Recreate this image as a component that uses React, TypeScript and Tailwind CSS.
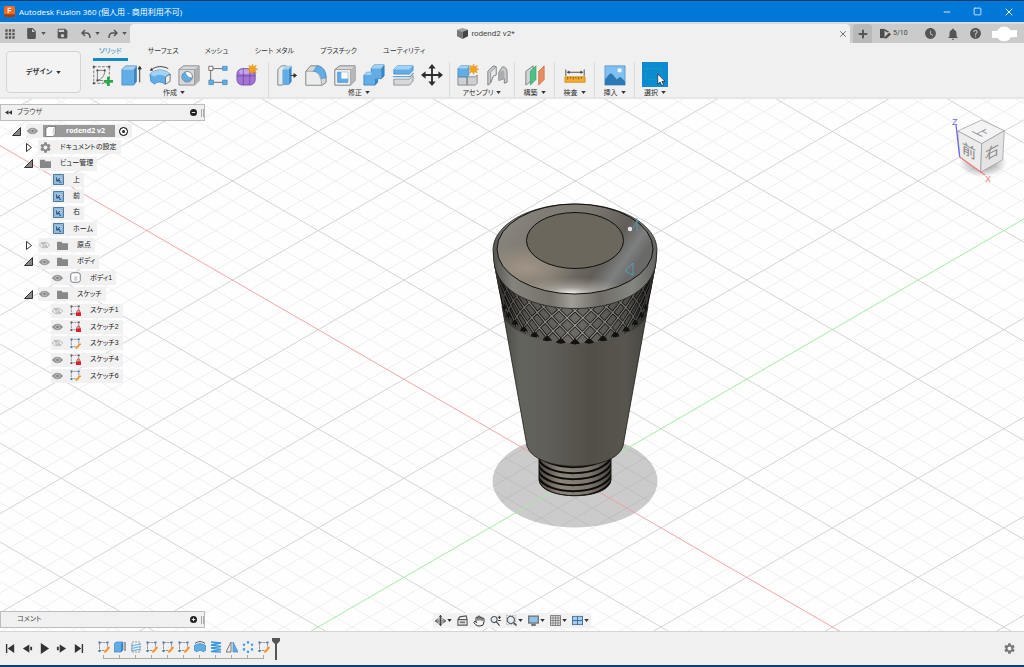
import { type ReactNode } from "react";
import clsx from "clsx";
import { Hand, Minus, Plus, Square, X } from "lucide-react";
import { MdApps, MdHelp, MdInsertDriveFile, MdNotifications, MdSave, MdSettings, MdWatchLater } from "react-icons/md";

const jp = "font-['Liberation_Sans','Noto_Sans_CJK_JP',sans-serif] [font-feature-settings:'palt']";

function Caret({ className = "" }: { className?: string }) {
  return (
    <svg viewBox="0 0 6 4" className={clsx("h-[3px] w-[5px] shrink-0", className)} fill="currentColor" aria-hidden>
      <path d="M0 0h6L3 4z" />
    </svg>
  );
}

function Glyph({ size = "h-6 w-6", box = "0 0 24 24", children }: { size?: string; box?: string; children: ReactNode }) {
  return (
    <svg viewBox={box} className={clsx("shrink-0", size)} fill="none" aria-hidden>
      {children}
    </svg>
  );
}

/* ---------- ribbon icons ---------- */

const BLUE = "#62ade6";
const DEEP = "#3a86c4";
const LIGHT = "#a5d2f3";
const GREY = "#d7d8d9";
const EDGE = "#7c7e80";

const sun = (
  <path
    d="M18 0l1.2 3 2.9-1.6-1.1 3.1 3 1.1-3 1.2 1.2 3-3-1.4L18 11.500l-1.200-3.100-3 1.400 1.300-3-3.100-1.200 3.100-1.100-1.200-3.100 3 1.600z"
    fill="#f2a21c"
    stroke="#d98a10"
    strokeWidth=".4"
  />
);

const ribbonIcons: Record<string, ReactNode> = {
  sketch: (
    <>
      <path d="M3 3h17v18H3z" stroke="#555" strokeDasharray="3 1.500" strokeWidth=".8" />
      <path d="M7 7v11M7 18h6M7 7h8M15 7c0 6-3 9-8 11" stroke="#777" strokeWidth="1" />
      <path d="M2 2h2v2H2zM19 2h2v2h-2zM2 20h2v2H2zM6 6h2v2H6zM14 6h2v2h-2zM6 17h2v2H6z" fill="#444" />
      <path d="M17.500 14h3v3.500H24v3h-3.500V24h-3v-3.500H14v-3h3.500z" fill="#2ba84a" />
    </>
  ),
  extrude: (
    <>
      <path d="M2 6l4-4h12l-3 4z" fill={LIGHT} />
      <path d="M2 6h13v17H2z" fill={BLUE} />
      <path d="M15 6l3-4v17l-3 4z" fill={DEEP} />
      <path d="M2 6l4-4h12v17l-3 4H2z" stroke={DEEP} strokeWidth=".7" />
      <path d="M21.500 20V4M19.800 5.500l1.700-3 1.700 3z" stroke="#333" fill="#333" />
    </>
  ),
  revolve: (
    <>
      <path d="M1 11c6-6 16-6 22 0l-1 8-5 3c-3-3-8-3-11 0l-4-3z" fill={BLUE} stroke={DEEP} strokeWidth=".8" />
      <path d="M1 11c6-6 16-6 22 0l-5 3c-4-3-9-3-12 0z" fill={LIGHT} />
      <path d="M23 11v8l-5 3v-8z" fill="#eee" stroke="#555" strokeWidth=".8" />
      <path d="M3 6c5-4 12-4 18-1" stroke="#333" />
      <path d="M1 7.500l1.500-3.500 2 3z" fill="#333" />
    </>
  ),
  hole: (
    <>
      <path d="M1 6l5-4h17v16l-5 5H1z" fill={GREY} stroke={EDGE} strokeWidth=".9" />
      <path d="M18 6l5-4v16l-5 5z" fill="#aeb0b2" />
      <path d="M1 6h17v17" stroke={EDGE} strokeWidth=".6" />
      <circle cx="10" cy="14" r="5.800" fill="#fff" stroke={EDGE} />
      <path d="M8 9a5.200 5.200 0 1 0 7 6c-4 0-6-2-7-6z" fill={BLUE} stroke={DEEP} strokeWidth=".6" />
    </>
  ),
  pattern: (
    <>
      <path d="M5 5h14M4 5v15M5 20h14" stroke="#555" strokeWidth=".9" />
      <path d="M2 2.500h4.500V7H2z" fill="#fff" stroke="#666" />
      <path d="M17 2.500h5V7h-5zM2 17.500h5v5H2zM17 17.500h5v5h-5z" fill={BLUE} stroke={DEEP} strokeWidth=".7" />
    </>
  ),
  form: (
    <>
      <rect x="1" y="5" width="20" height="18" rx="6" fill="#a275d6" />
      <path d="M3 8c4-4 12-4 15 0l-3 3H5z" fill="#c6a5ec" />
      <path d="M8 5v18M15 5v18M1 13h20" stroke="#6e43a3" strokeWidth=".8" />
      <rect x="1" y="5" width="20" height="18" rx="6" stroke="#6e43a3" strokeWidth=".8" />
      {sun}
    </>
  ),
  pressPull: (
    <>
      <path d="M2 6l4-4h5v17l-4 4H2z" fill="#e8e9ea" stroke={EDGE} />
      <path d="M7 6l3-4h7l-3 4z" fill={LIGHT} />
      <path d="M7 6h7v17H7z" fill={BLUE} />
      <path d="M14 6l3-4v17l-3 4z" fill={DEEP} />
      <path d="M16 12.500h5M19.500 10.500l3 2-3 2z" stroke="#333" fill="#333" />
    </>
  ),
  fillet: (
    <>
      <path d="M1 23V8l5-6h7c6 0 10 6 10 13v5l-4 3z" fill={GREY} stroke={EDGE} />
      <path d="M1 8h8c5 0 9 6 9 15H1z" fill="#ebecec" stroke={EDGE} strokeWidth=".6" />
      <path d="M9 8l4-6c6 0 10 6 10 13l-5 1c-1-5-4-8-9-8z" fill={BLUE} stroke={DEEP} strokeWidth=".6" />
    </>
  ),
  shell: (
    <>
      <path d="M1 6l5-4h17v16l-5 5H1z" fill={GREY} stroke={EDGE} />
      <path d="M1 6h17v17H1z" fill="#ededed" stroke={EDGE} strokeWidth=".7" />
      <path d="M18 6l5-4v16l-5 5z" fill="#b5b7b9" />
      <path d="M4 9h11v11H4z" fill={BLUE} stroke={DEEP} strokeWidth=".7" />
      <path d="M8 9h7v7H8z" fill="#fff" />
    </>
  ),
  combine: (
    <>
      <path d="M9 5l3-4h11v12l-3 3h-4v4l-3 3H1V12l3-3h5z" fill={BLUE} stroke={DEEP} strokeWidth=".9" />
      <path d="M9 5l3-4h11l-3 4zM1 12l3-3h5v3z" fill={LIGHT} />
      <path d="M20 5l3-4v12l-3 3zM13 16h3v4l-3 3z" fill={DEEP} />
    </>
  ),
  offset: (
    <>
      <path d="M2 6l4-4h17v5l-4 4H2z" fill={BLUE} stroke={DEEP} strokeWidth=".8" />
      <path d="M2 6l4-4h17l-4 4z" fill={LIGHT} />
      <path d="M1 12.500h18.500l4-3.500v3l-4 3.500H1z" fill="#fff" />
      <path d="M1 14h18.500l4-4" stroke={DEEP} strokeWidth="1.100" />
      <path d="M2 16.500h17l4-4v6l-4 4.500H2z" fill={GREY} stroke={EDGE} strokeWidth=".8" />
    </>
  ),
  move: (
    <path
      d="M12 0l4 5h-3v6h6V8l5 4-5 4v-3h-6v6h3l-4 5-4-5h3v-6H5v3l-5-4 5-4v3h6V5H8z"
      fill="#2c2c2c"
    />
  ),
  component: (
    <>
      <path d="M1 14h10v9H1zM11 14h9l2-2v9l-2 2h-9z" fill="#cfd0d1" stroke={EDGE} strokeWidth=".9" />
      <path d="M1 5l3-3h9v10l-2 2H1z" fill={BLUE} stroke={DEEP} strokeWidth=".8" />
      <path d="M1 5l3-3h9l-2 3z" fill={LIGHT} />
      {sun}
    </>
  ),
  joint: (
    <>
      <path d="M2 8l6-6 3 1v9l-3 1-3 8-3 2z" fill="#c9cacc" stroke={EDGE} />
      <path d="M5 9l6-6v9l-3 1-3 7z" fill="#e6e7e8" stroke={EDGE} strokeWidth=".7" />
      <path d="M14 9l4-6c3 0 5 2 5 6v11l-3 1v-5l-6 2z" fill="#c9cacc" stroke={EDGE} />
      <path d="M14 9l4-2c2 0 2 2 2 5v4l-6 2z" fill="#aaacae" />
    </>
  ),
  construct: (
    <>
      <path d="M2 8l8-6v15l-8 6z" fill="#d2d4d5" stroke={EDGE} />
      <path d="M7 8l6-6v15l-6 6z" fill="#4cc383" stroke="#36a069" strokeWidth=".8" />
      <path d="M16 8l6-6v15l-6 6z" fill="#e88d61" stroke="#c96c40" strokeWidth=".8" />
    </>
  ),
  inspect: (
    <>
      <path d="M2 6v7M22 6v7M4 9h16" stroke="#444" />
      <path d="M3 9l3-2v4zM21 9l-3-2v4z" fill="#444" />
      <path d="M1 14h22v6H1z" fill="#f3ac2f" stroke="#c98411" strokeWidth=".8" />
      <path d="M4 14v3M7 14v2M10 14v3M13 14v2M16 14v3M19 14v2" stroke="#7a4d05" strokeWidth=".8" />
    </>
  ),
  insert: (
    <>
      <path d="M1 2h22v21H1z" fill="#7fc0f0" stroke="#3f87bf" strokeWidth=".7" />
      <path d="M1 17l5-6c1-1 2-1 3 0l5 6 2-2c1-1 2-1 3 0l4 4v4H1z" fill="#2d79b5" />
      <circle cx="17" cy="7" r="2.300" fill="#fff" />
    </>
  ),
  select: (
    <>
      <path d="M2 5h17v12H2z" stroke="#1eb0a0" strokeDasharray="2 1.500" strokeWidth=".7" />
      <path d="M15 11v11l2.600-2.300 1.700 3.800 2-1-1.700-3.600H23z" fill="#fff" stroke="#222" strokeWidth=".8" />
    </>
  ),
};

type Tool = [icon: string, name: string];

const groups: { label: string; tools: Tool[] }[] = [
  {
    label: "作成",
    tools: [
      ["sketch", "スケッチを作成"],
      ["extrude", "押し出し"],
      ["revolve", "回転"],
      ["hole", "穴"],
      ["pattern", "パターン"],
      ["form", "フォームを作成"],
    ],
  },
  {
    label: "修正",
    tools: [
      ["pressPull", "プレス/プル"],
      ["fillet", "フィレット"],
      ["shell", "シェル"],
      ["combine", "結合"],
      ["offset", "面をオフセット"],
      ["move", "移動"],
    ],
  },
  {
    label: "アセンブリ",
    tools: [
      ["component", "新規コンポーネント"],
      ["joint", "ジョイント"],
    ],
  },
  { label: "構築", tools: [["construct", "オフセット平面"]] },
  { label: "検査", tools: [["inspect", "計測"]] },
  { label: "挿入", tools: [["insert", "キャンバス"]] },
  { label: "選択", tools: [["select", "選択"]] },
];

const ribbonTabs = ["ソリッド", "サーフェス", "メッシュ", "シート メタル", "プラスチック", "ユーティリティ"];

/* ---------- header ---------- */

function TitleBar() {
  return (
    <header className="flex h-[22px] shrink-0 items-center border-t border-[#0b3b66] bg-[#0078d7] pl-1 text-white">
      <Glyph size="h-[11px] w-[11px]" box="0 0 12 12">
        <rect width="12" height="12" rx="1.500" fill="#f26a21" />
        <path d="M0 9h12v1.500A1.500 1.500 0 0 1 10.500 12h-9A1.500 1.500 0 0 1 0 10.500z" fill="#a63c07" />
        <path d="M4.500 8V2.500H8M4.500 5H7.500" stroke="#fff" strokeWidth="1.200" />
      </Glyph>
      <h1 className="ml-1 font-['Open_Sans','Noto_Sans_CJK_JP',sans-serif] text-[8px] whitespace-nowrap">
        Autodesk Fusion 360 (個人用 - 商用利用不可)
      </h1>
      <div className="ml-auto flex items-center">
        <button aria-label="最小化" className="flex w-[31px] justify-center">
          <Minus size={10} strokeWidth={2} />
        </button>
        <button aria-label="最大化" className="flex w-[31px] justify-center">
          <Square size={9} strokeWidth={2} />
        </button>
        <button aria-label="閉じる" className="flex w-[31px] justify-center">
          <X size={12} strokeWidth={2} />
        </button>
      </div>
    </header>
  );
}

function QuickBar() {
  return (
    <div className="flex h-[21px] shrink-0 items-stretch border-t-2 border-[#dcdcdc] bg-[#cbcbcb] text-[#555]">
      <div className="flex w-[130px] shrink-0 items-center pl-[3px]">
        <button aria-label="データ パネル">
          <MdApps size={14} />
        </button>
        <button aria-label="ファイル" className="ml-2 flex items-center gap-[3px]">
          <MdInsertDriveFile size={13} />
          <Caret />
        </button>
        <button aria-label="保存" className="ml-[10px]">
          <MdSave size={13} />
        </button>
        <button aria-label="元に戻す" className="ml-3 flex items-center gap-1">
          <Glyph size="h-[10px] w-[10px]" box="0 0 10 10">
            <path d="M1.500 4h4C8 4 9 5.500 9 9M4 1L1 4l3 3" stroke="currentColor" strokeWidth="1.500" />
          </Glyph>
          <Caret />
        </button>
        <button aria-label="やり直し" className="ml-2 flex items-center gap-1">
          <Glyph size="h-[10px] w-[10px]" box="0 0 10 10">
            <path d="M8.500 4h-4C2 4 1 5.500 1 9M6 1l3 3-3 3" stroke="currentColor" strokeWidth="1.500" />
          </Glyph>
          <Caret />
        </button>
      </div>
      <div className="flex flex-1 items-center rounded-t-sm bg-[#f0f0f0] pr-[2px]">
        <div className="flex flex-1 items-center justify-center gap-[3px] pl-1">
          <Glyph size="h-[11px] w-[11px]" box="0 0 12 12">
            <path d="M0 2l6-2 6 2-6 2z" fill="#a0a0a0" />
            <path d="M0 2l6 2v8L0 9z" fill="#777" />
            <path d="M12 2L6 4v8l6-3z" fill="#444" />
          </Glyph>
          <span className="font-['Roboto',sans-serif] text-[8px] text-[#444]">rodend2 v2*</span>
        </div>
        <button aria-label="タブを閉じる">
          <X size={10} strokeWidth={2} />
        </button>
      </div>
      <button aria-label="新しいデザイン" className="ml-[3px] flex w-[19px] items-center justify-center rounded-t-sm bg-[#b9b9b9]">
        <Plus size={12} strokeWidth={4} />
      </button>
      <div className="flex w-[152px] shrink-0 items-center pl-2">
        <button className="flex items-center gap-[2px] font-['Roboto',sans-serif] text-[7px] text-[#444]">
          <Glyph size="h-[11px] w-[11px]" box="0 0 12 12">
            <path d="M0 1h5v10H0z" fill="#4c4c4c" />
            <path d="M5 1l5 3-2 1-3-2zM5 10l5-5 2 2-5 4.500H5z" fill="#4c4c4c" />
          </Glyph>
          5/10
        </button>
        <button aria-label="ジョブ ステータス" className="ml-4">
          <MdWatchLater size={13} />
        </button>
        <button aria-label="通知" className="ml-[9px]">
          <MdNotifications size={14} />
        </button>
        <button aria-label="ヘルプ" className="ml-[9px]">
          <MdHelp size={13} />
        </button>
        <button aria-label="アカウント" className="ml-[9px]">
          <Glyph size="h-4 w-[26px]" box="0 0 26 16">
            <circle cx="13" cy="8" r="7.500" fill="#fff" />
            <path d="M1 5l25-1v7L1 12z" fill="#fff" />
          </Glyph>
        </button>
      </div>
    </div>
  );
}

function Ribbon() {
  return (
    <div className="flex h-14 shrink-0 border-b-2 border-[#e6e6e6] bg-[#f0f0f0] text-[#333]">
      <button className="mt-2 ml-[6px] flex h-[42px] w-[75px] shrink-0 items-center justify-center gap-1 rounded-sm border border-[#d4d4d4] bg-[#f3f3f3] text-[7px] font-bold">
        デザイン
        <Caret />
      </button>
      <div className="ml-[6px] flex flex-col">
        <div role="tablist" className="flex h-[18px] gap-[14px] pl-[6px]">
          {ribbonTabs.map((tab, i) => (
            <button
              key={tab}
              role="tab"
              aria-selected={i === 0}
              className={clsx(
                "border-b-[3px] px-[6px] text-[7px] leading-[15px] whitespace-nowrap",
                i === 0 ? "border-[#1789c4] text-[#1789c4]" : "border-transparent",
              )}
            >
              {tab}
            </button>
          ))}
        </div>
        <div className="flex pt-px">
          {groups.map(({ label, tools }, i) => (
            <div
              key={label}
              className={clsx(
                "flex min-w-10 flex-col items-center",
                i === 0 ? "pr-[7px]" : "px-[3px]",
                i < groups.length - 1 && "border-r border-[#dcdcdc]",
              )}
            >
              <div className="flex">
                {tools.map(([icon, name]) => (
                  <button
                    key={icon}
                    aria-label={name}
                    className={clsx(
                      "flex h-[25px] items-center justify-center",
                      icon === "select" ? "w-[26px] bg-[#0d8bd0]" : "w-[29px]",
                    )}
                  >
                    <Glyph size="h-[22px] w-[22px]">{ribbonIcons[icon]}</Glyph>
                  </button>
                ))}
              </div>
              <button className="flex items-center gap-[3px] text-[7px] leading-[11px] whitespace-nowrap">
                {label}
                <Caret />
              </button>
            </div>
          ))}
        </div>
      </div>
    </div>
  );
}

/* ---------- browser tree ---------- */

function Eye({ hidden }: { hidden?: boolean }) {
  return (
    <Glyph size="h-2 w-[11px]" box="0 0 12 8">
      <path
        d="M.5 4C3 0 9 0 11.500 4 9 8 3 8 .5 4z"
        fill={hidden ? "none" : "#9a9a9a"}
        stroke={hidden ? "#a5a5a5" : "#888"}
        strokeWidth=".8"
      />
      <circle cx="6" cy="4" r="1.900" fill={hidden ? "none" : "#777"} stroke={hidden ? "#a5a5a5" : "#ddd"} strokeWidth=".8" />
      {hidden && <path d="M2 1l8 6" stroke="#a5a5a5" strokeWidth=".8" />}
    </Glyph>
  );
}

const treeIcons: Record<string, ReactNode> = {
  folder: <path d="M0 2h5l1 1.500h6V11H0z" fill="#888" />,
  view: (
    <>
      <path d="M.5.5h11v11H.5z" fill="#a9cbe6" stroke="#3d6f9c" />
      <path d="M2 2h8v8H2z" stroke="#6b98bd" strokeWidth=".6" />
      <path d="M4 3.500v4h4M4.500 7.500l3-3M7 9h2" stroke="#24527a" strokeWidth="1.100" />
    </>
  ),
  body: (
    <>
      <rect x=".8" y=".8" width="10.400" height="10.400" rx="2.500" fill="#fff" stroke="#666" strokeWidth=".9" />
      <path d="M4.500 4.500h3.500v5H4.500z" fill="#ccd3dc" />
    </>
  ),
  component: (
    <>
      <path d="M1 3l2.500-2.500H11V9l-2.500 2.500H1z" fill="#fff" stroke="#555" strokeWidth=".7" />
      <path d="M8.500 3L11 .5V9l-2.500 2.500z" fill="#d5d5d5" />
    </>
  ),
  locked: (
    <>
      <path d="M1.500 1.500h8v8h-8z" stroke="#8a8a8a" strokeWidth=".9" strokeDasharray="2.500 .7" />
      <path d="M.5.5h2v2h-2zM8.500.5h2v2h-2zM.5 9h2v2h-2z" fill="#555" />
      <path d="M6.500 8h5.500v4H6.500z" fill="#d3242f" />
      <path d="M7.700 8V6.700c0-1.500 3-1.500 3 0V8" stroke="#d3242f" />
    </>
  ),
  sketch: (
    <>
      <path d="M1.500 1.500h8v8h-8z" stroke="#7d8790" strokeWidth=".9" strokeDasharray="2.500 .7" />
      <path d="M.5.5h2v2h-2zM8.500.5h2v2h-2zM.5 9h2v2h-2z" fill="#3a78b0" />
      <path d="M6.500 11.500L11.500 6" stroke="#f0962e" strokeWidth="2" />
    </>
  ),
};

type Node = {
  label: string;
  depth: 1 | 2;
  icon: string;
  open?: boolean;
  eye?: "on" | "off";
};

const nodes: Node[] = [
  { label: "ドキュメントの設定", depth: 1, icon: "gear", open: false },
  { label: "ビュー管理", depth: 1, icon: "folder", open: true },
  { label: "上", depth: 2, icon: "view" },
  { label: "前", depth: 2, icon: "view" },
  { label: "右", depth: 2, icon: "view" },
  { label: "ホーム", depth: 2, icon: "view" },
  { label: "原点", depth: 1, icon: "folder", open: false, eye: "off" },
  { label: "ボディ", depth: 1, icon: "folder", open: true, eye: "on" },
  { label: "ボディ1", depth: 2, icon: "body", eye: "on" },
  { label: "スケッチ", depth: 1, icon: "folder", open: true, eye: "on" },
  { label: "スケッチ1", depth: 2, icon: "locked", eye: "off" },
  { label: "スケッチ2", depth: 2, icon: "locked", eye: "on" },
  { label: "スケッチ3", depth: 2, icon: "sketch", eye: "off" },
  { label: "スケッチ4", depth: 2, icon: "locked", eye: "on" },
  { label: "スケッチ6", depth: 2, icon: "sketch", eye: "on" },
];

function Twisty({ open }: { open?: boolean }) {
  return (
    <button aria-label={open ? "折りたたむ" : "展開"} className="flex w-[14px] shrink-0 items-center">
      <Glyph size="h-[9px] w-[9px]" box="0 0 9 9">
        {open ? (
          <path d="M8.500.5v8h-8z" fill="#888" stroke="#333" />
        ) : (
          <path d="M2.500 .5l5 4-5 4z" fill="#fff" stroke="#333" />
        )}
      </Glyph>
    </button>
  );
}

function TreeRow({ label, depth, icon, open, eye }: Node) {
  return (
    <li className={clsx("flex h-[14px]", depth === 1 ? "pl-6" : "pl-[51px]")}>
      {open !== undefined && <Twisty open={open} />}
      <div className="flex items-center bg-[#f0f0f0]/90 pr-1">
        {eye && (
          <button aria-label="表示/非表示" className="flex w-[13px] justify-center">
            <Eye hidden={eye === "off"} />
          </button>
        )}
        <span className={clsx("flex justify-center", eye ? "mr-1 w-[22px]" : "mr-2 w-[14px]")}>
          {icon === "gear" ? (
            <MdSettings size={13} color="#888" />
          ) : (
            <Glyph size="h-[11px] w-[11px]" box="0 0 12 12">
              {treeIcons[icon]}
            </Glyph>
          )}
        </span>
        <span className="text-[7px] whitespace-nowrap">{label}</span>
      </div>
    </li>
  );
}

function PanelBar({ title, sign, collapse }: { title: string; sign: "+" | "-"; collapse?: boolean }) {
  return (
    <div className="flex h-[17px] w-[205px] items-center border border-[#bdbdbd] bg-[#f0f0f0] pl-1 text-[7px] text-[#444]">
      <span className="w-3">
        {collapse && (
          <Glyph size="h-[5px] w-[7px]" box="0 0 8 5">
            <path d="M4 0v5L0 2.500zM8 0v5L4 2.500z" fill="#333" />
          </Glyph>
        )}
      </span>
      {title}
      <button aria-label={sign === "+" ? "追加" : "閉じる"} className="mr-1 ml-auto">
        <Glyph size="h-[7px] w-[7px]" box="0 0 8 8">
          <circle cx="4" cy="4" r="4" fill="#222" />
          <path d={sign === "+" ? "M2 4h4M4 2v4" : "M2 4h4"} stroke="#fff" />
        </Glyph>
      </button>
      <span className="h-2 w-[3px] border-x border-[#aaa]" />
    </div>
  );
}

function Browser() {
  return (
    <aside className="text-[#222]">
      <PanelBar title="ブラウザ" sign="-" collapse />
      <ul className="mt-[3px] flex h-[259px] flex-col justify-between">
        <li className="flex h-[14px] pl-3">
          <Twisty open />
          <div className="flex items-center gap-1 bg-[#f0f0f0] pr-1">
            <button aria-label="表示/非表示" className="flex w-[13px] justify-center">
              <Eye />
            </button>
            <span className="flex h-3 w-[72px] items-center bg-[#999] pl-[2px] font-['Open_Sans',sans-serif] text-[7px] font-bold text-white">
              <Glyph size="h-[11px] w-[11px]" box="0 0 12 12">
                {treeIcons.component}
              </Glyph>
              <span className="flex-1 text-center">rodend2 v2</span>
            </span>
            <input
              type="radio"
              name="active"
              defaultChecked
              aria-label="コンポーネントをアクティブ化"
              className="h-[9px] w-[9px] appearance-none rounded-full border border-[#222] bg-[#222] ring-2 ring-white ring-inset"
            />
          </div>
        </li>
        {nodes.map((n) => (
          <TreeRow key={n.label} {...n} />
        ))}
      </ul>
    </aside>
  );
}

/* ---------- viewport ---------- */

// origin of the ground plane and half-diagonals of one major cell
const OX = 575.3;
const OY = 478.3;
const DX = 85.7;
const DY = 49.55;

function gridPath(major: boolean) {
  let d = "";
  for (let i = -80; i <= 80; i++) {
    if (i === 0 || (i % 5 === 0) !== major) continue;
    const y = OY + (i * 2 * DY) / 5;
    const run = 1600;
    const rise = (run * DY) / DX;
    d += `M${OX - run} ${y - rise}L${OX + run} ${y + rise}M${OX - run} ${y + rise}L${OX + run} ${y - rise}`;
  }
  return d;
}

const KNURL_STEP = 0.2;

function knurlPoint(th: number, t: number) {
  const r = 82 - 11 * t;
  return [575 + r * Math.sin(th), 260 + 42 * t + (47 - 5 * t) * Math.cos(th)];
}

function knurlPath() {
  let d = "";
  const twist = 0.5;
  for (let i = -11; i <= 11; i++) {
    for (const s of [-1, 1]) {
      const pts: string[] = [];
      for (let k = 0; k <= 6; k++) {
        const t = k / 6;
        const th = i * KNURL_STEP + s * twist * (t - 0.5);
        if (Math.abs(th) > Math.PI / 2) continue;
        pts.push(knurlPoint(th, t).map((n) => n.toFixed(1)).join(" "));
      }
      if (pts.length > 1) d += `M${pts.join("L")}`;
    }
  }
  return d;
}

// little triangles where the grooves run out on the cone
function runoutPath() {
  let d = "";
  for (let i = -7; i <= 7; i++) {
    const [x, y] = knurlPoint(i * KNURL_STEP, 0.96);
    const w = 4 * Math.cos(i * KNURL_STEP) + 1;
    d += `M${x - w} ${y + 1}L${x} ${y - 4}L${x + w} ${y + 1}L${x} ${y + 2}z`;
  }
  return d;
}

const MINOR = gridPath(false);
const MAJOR = gridPath(true);
const KNURL = knurlPath();
const RUNOUT = runoutPath();

function Scene() {
  return (
    <svg
      viewBox="0 99 1024 532"
      preserveAspectRatio="xMidYMid slice"
      className="absolute inset-0 h-full w-full"
      fill="none"
      aria-hidden
    >
      <defs>
        <linearGradient id="cone">
          <stop offset="0" stopColor="#4a4a45" />
          <stop offset=".12" stopColor="#63635d" />
          <stop offset=".3" stopColor="#605f59" />
          <stop offset=".6" stopColor="#524f47" />
          <stop offset=".85" stopColor="#57554e" />
          <stop offset="1" stopColor="#474640" />
        </linearGradient>
        <linearGradient id="rim">
          <stop offset="0" stopColor="#55544e" />
          <stop offset=".12" stopColor="#84837c" />
          <stop offset=".35" stopColor="#77736a" />
          <stop offset=".48" stopColor="#a09d96" />
          <stop offset=".65" stopColor="#6e6c65" />
          <stop offset=".85" stopColor="#858681" />
          <stop offset="1" stopColor="#62635e" />
        </linearGradient>
        <linearGradient id="dome" x1="0" y1="0" x2="1" y2=".4">
          <stop offset="0" stopColor="#8f8e88" />
          <stop offset=".25" stopColor="#827e76" />
          <stop offset=".55" stopColor="#7c7870" />
          <stop offset=".8" stopColor="#625d57" />
          <stop offset=".92" stopColor="#7d8080" />
          <stop offset="1" stopColor="#6a6b68" />
        </linearGradient>
        <radialGradient id="shine" gradientUnits="userSpaceOnUse" cx="0" cy="0" r="1" gradientTransform="translate(571 293) scale(62 16)">
          <stop offset="0" stopColor="#fff" stopOpacity=".9" />
          <stop offset=".35" stopColor="#d9d4cc" stopOpacity=".5" />
          <stop offset="1" stopColor="#b5aa9b" stopOpacity="0" />
        </radialGradient>
        <radialGradient id="warm" gradientUnits="userSpaceOnUse" cx="0" cy="0" r="1" gradientTransform="translate(526 268) scale(50 24)">
          <stop offset="0" stopColor="#a89b8b" stopOpacity=".8" />
          <stop offset="1" stopColor="#a59887" stopOpacity="0" />
        </radialGradient>
        <linearGradient id="side">
          <stop offset="0" stopColor="#000" stopOpacity=".8" />
          <stop offset=".22" stopColor="#000" stopOpacity=".2" />
          <stop offset=".5" stopColor="#000" stopOpacity="0" />
          <stop offset=".8" stopColor="#000" stopOpacity=".25" />
          <stop offset="1" stopColor="#000" stopOpacity=".85" />
        </linearGradient>
        <linearGradient id="thread">
          <stop offset="0" stopColor="#4b4842" />
          <stop offset=".3" stopColor="#8b8479" />
          <stop offset=".7" stopColor="#7b756b" />
          <stop offset="1" stopColor="#45433e" />
        </linearGradient>
        <clipPath id="band">
          <path d="M493 252L657 252L656 264L646 317C630 352 520 352 504 317L494 264z" />
        </clipPath>
        <clipPath id="stud">
          <path d="M539 440V480C541 501 609 501 611 480V440z" />
        </clipPath>
      </defs>

      <rect x="-1000" y="-1000" width="3024" height="3000" fill="#fefefe" />
      <path d={MINOR} stroke="#ededed" strokeWidth=".9" />
      <path d={MAJOR} stroke="#cfcfcf" strokeWidth=".9" />
      <ellipse cx="575" cy="481" rx="82.500" ry="46.500" fill="#000" fillOpacity=".2" />
      <path d={`M${OX - 1200} ${OY - (1200 * DY) / DX}L${OX + 1200} ${OY + (1200 * DY) / DX}`} stroke="#ee9c9c" strokeWidth=".9" />
      <path d={`M${OX - 1200} ${OY + (1200 * DY) / DX}L${OX + 1200} ${OY - (1200 * DY) / DX}`} stroke="#a2eda2" strokeWidth="1" />

      <g clipPath="url(#stud)">
        <path d="M539 440h72v60h-72z" fill="url(#thread)" />
        {[452, 458, 464, 470, 476, 481].map((y) => (
          <path key={y} d={`M538 ${y}C545 ${y + 21} 605 ${y + 20} 612 ${y - 2}`} stroke="#0c0b0a" strokeWidth="2" />
        ))}
      </g>
      <path d="M539 456V480C541 501 609 501 611 480V456" stroke="#1a1917" />

      <path d="M502 306L527 446C535 473 615 473 623 446L648 306z" fill="url(#cone)" stroke="#1c1b19" strokeWidth=".8" />

      <g clipPath="url(#band)">
        <path d="M490 250h170v100H490z" fill="#6b6a64" />
        <path d={KNURL} stroke="#151513" strokeWidth="2.800" />
        <path d={KNURL} stroke="#96948d" strokeWidth="1.300" />
        <path d="M490 250h170v100H490z" fill="url(#side)" />
      </g>
      <path d={RUNOUT} fill="#11110f" />

      <path
        d="M493 250A82 46 0 0 1 657 250L656 262C650 324 500 324 494 262z"
        fill="url(#rim)"
        stroke="#22211f"
        strokeWidth=".8"
      />
      <ellipse cx="575" cy="249" rx="78" ry="45" fill="url(#dome)" />
      <ellipse cx="575" cy="249" rx="78" ry="45" fill="url(#warm)" />
      <ellipse cx="575" cy="249" rx="78" ry="45" fill="url(#shine)" stroke="#11100f" strokeWidth="1" />
      <ellipse cx="575" cy="240.500" rx="48.500" ry="28" fill="#6b675d" stroke="#11100f" strokeWidth="1" />

      <circle cx="630" cy="229" r="2.200" fill="#e4ecf2" />
      <path d="M633 228l5-8M637 218v13M625 271l8-8v12z" stroke="#4fa3be" strokeWidth=".9" />
    </svg>
  );
}

function ViewCube() {
  return (
    <svg viewBox="945 112 65 76" className="absolute top-[13px] right-[14px] h-[76px] w-[65px]" fill="none" aria-label="ビューキューブ">
      <defs>
        <radialGradient id="cubeShadow">
          <stop offset=".4" stopColor="#000" stopOpacity=".3" />
          <stop offset="1" stopColor="#000" stopOpacity="0" />
        </radialGradient>
      </defs>
      <ellipse cx="983" cy="163" rx="24" ry="14" fill="url(#cubeShadow)" />
      <path d="M957.700 131L981.700 120L1004.300 130.700L981.700 143.700z" fill="#f3f3f3" stroke="#999" strokeWidth=".7" />
      <path d="M957.700 131L981.700 143.700L980.700 172.300L959.700 157z" fill="#ececec" stroke="#999" strokeWidth=".7" />
      <path d="M1004.300 130.700L981.700 143.700L980.700 172.300L1002.700 159.700z" fill="#e4e4e4" stroke="#999" strokeWidth=".7" />
      <path d="M956 125L959.700 157" stroke="#6c6ce8" strokeWidth="1.300" />
      <path d="M959.700 157L985 175" stroke="#ef7d7d" strokeWidth="1.300" />
      <g className="font-['Noto_Sans_CJK_JP',sans-serif]" fontSize="14" fill="#858585" textAnchor="middle">
        <text transform="translate(969 156) skewY(28)">前</text>
        <text transform="translate(992 157) skewY(-28)">右</text>
        <text transform="matrix(.8 .4 -.8 .4 977 134)">上</text>
      </g>
      <g className="font-['Liberation_Sans',sans-serif]" fontSize="9">
        <text x="952" y="125" fill="#6c6ce8">
          Z
        </text>
        <text x="985" y="182" fill="#ef7d7d">
          X
        </text>
      </g>
    </svg>
  );
}

const navIcons: { name: string; caret?: boolean; art: ReactNode }[] = [
  {
    name: "オービット",
    caret: true,
    art: (
      <>
        <path d="M6 0v12M0 6.500h12" stroke="#444" strokeWidth="1.200" />
        <ellipse cx="6" cy="6.500" rx="5" ry="2.300" stroke="#555" />
        <path d="M4 2.500L6 0l2 2.500zM4 9.500L6 12l2-2.500z" fill="#444" />
      </>
    ),
  },
  {
    name: "ビュー正面",
    art: (
      <>
        <path d="M1 5h10v6H1zM1 5l2-3 7-1 1 4" stroke="#555" strokeWidth="1.200" />
        <path d="M3 7h6v2H3z" fill="#777" />
      </>
    ),
  },
  { name: "画面移動", art: null },
  {
    name: "ズーム",
    art: (
      <>
        <circle cx="4.500" cy="5" r="3.300" stroke="#555" strokeWidth="1.200" fill="#e2eef7" />
        <path d="M7 7.500l3.500 4M8.500 2.500h3.500M10.300.8v3.500M8.800 6h3" stroke="#444" strokeWidth="1.200" />
      </>
    ),
  },
  {
    name: "フィット",
    caret: true,
    art: (
      <>
        <path d="M.5.5h10v10H.5z" stroke="#999" strokeWidth=".7" strokeDasharray="2 1" />
        <circle cx="5.300" cy="5.300" r="4" stroke="#555" strokeWidth="1.200" fill="#e2eef7" />
        <path d="M8.500 8.500l3 3" stroke="#444" strokeWidth="1.600" />
      </>
    ),
  },
  {
    name: "表示設定",
    caret: true,
    art: (
      <>
        <path d="M0 .5h12v9H0z" fill="#777" />
        <path d="M1.500 2h9v6h-9z" fill="#8fc3ec" />
        <path d="M3.500 9.500h5V12h-5z" fill="#777" />
      </>
    ),
  },
  {
    name: "グリッドとスナップ",
    caret: true,
    art: (
      <>
        <path d="M.5.5h11v11H.5z" fill="#ddd" stroke="#777" />
        <path d="M3.300.5v11M6 .5v11M8.700.5v11M.5 3.300h11M.5 6h11M.5 8.700h11" stroke="#777" strokeWidth=".8" />
      </>
    ),
  },
  {
    name: "ビューポート",
    caret: true,
    art: (
      <>
        <path d="M0 1h12v10H0z" fill="#4a6d93" />
        <path d="M1 2h4.500v3.500H1zM6.500 2H11v3.500H6.500zM1 6.500h4.500V10H1zM6.500 6.500H11V10H6.500z" fill="#a6cdee" />
      </>
    ),
  },
];

function NavBar() {
  return (
    <div className="absolute bottom-[3px] left-1/2 flex h-[15px] -translate-x-1/2 items-center gap-[5px] bg-[#f2f2f2] px-[2px] text-[#333]">
      {navIcons.map(({ name, caret, art }) => (
        <button key={name} aria-label={name} className="flex items-center gap-px">
          {art ? (
            <Glyph size="h-[11px] w-[11px]" box="0 0 12 12">
              {art}
            </Glyph>
          ) : (
            <Hand size={12} strokeWidth={2} />
          )}
          {caret && <Caret />}
        </button>
      ))}
    </div>
  );
}

/* ---------- timeline ---------- */

const playback: [string, string][] = [
  ["先頭へ", "M1 1h1.500v10H1zM10 1v10L3 6z"],
  ["前へ", "M8 1.500v9L1 6zM9 4h2v4H9z"],
  ["再生", "M2 0l9 6-9 6z"],
  ["次へ", "M4 1.500v9L11 6zM1 4h2v4H1z"],
  ["末尾へ", "M9.500 1H11v10H9.500zM2 1v10l7-5z"],
];

const featureArt: Record<string, ReactNode> = {
  sketch: treeIcons.sketch,
  extrude: (
    <>
      <path d="M0 3l2-2h7v8l-2 2H0z" fill={BLUE} stroke={DEEP} strokeWidth=".7" />
      <path d="M7 3l2-2v8l-2 2z" fill={DEEP} />
      <path d="M11 1v9" stroke="#555" />
    </>
  ),
  thread: (
    <>
      <path d="M2 1h8v10H2z" stroke="#999" strokeDasharray="2 1" />
      <path d="M1 5l10-2M1 7.500l10-2M1 10l10-2" stroke={BLUE} strokeWidth="1.200" />
    </>
  ),
  revolve: (
    <>
      <path d="M0 5c3-3 9-3 12 0v4l-3 2c-1-2-5-2-6 0L0 9z" fill={BLUE} stroke={DEEP} strokeWidth=".7" />
      <path d="M1 2.500c3-2.500 7-2.500 10 0" stroke="#555" />
    </>
  ),
  coil: <path d="M1 1l10 1L1 4l10 1.500L1 7l10 1.500L1 10.500l10 .5" stroke="#3b97dc" strokeWidth="1.400" />,
  mirror: (
    <>
      <path d="M5 1v10H0z" stroke="#777" fill="#eee" />
      <path d="M7 1v10h5z" fill={BLUE} stroke={DEEP} strokeWidth=".7" />
    </>
  ),
  circular: (
    <path
      d="M6 1.300v.1M10 3.700v.1M10 8.300v.1M6 10.700v.1M2 8.300v.1M2 3.700v.1"
      stroke="#4ba0de"
      strokeWidth="2.600"
      strokeLinecap="round"
    />
  ),
};

const features = ["sketch", "extrude", "thread", "sketch", "sketch", "sketch", "revolve", "coil", "mirror", "circular", "sketch"];

function Timeline() {
  return (
    <footer className="flex h-9 shrink-0 items-center border-t border-b-2 border-t-[#d5d5d5] border-b-[#0c4273] bg-[#f0f0f0] pl-[5px] text-[#333]">
      <div className="flex gap-[6px]">
        {playback.map(([name, d]) => (
          <button key={name} aria-label={name}>
            <Glyph size="h-[11px] w-[11px]" box="0 0 12 12">
              <path d={d} fill="#333" />
            </Glyph>
          </button>
        ))}
      </div>
      <ol className="ml-3 flex pt-[3px]">
        {features.map((f, i) => (
          <li key={i} className="flex flex-col items-center">
            <button aria-label={f} className="flex w-4 justify-center">
              <Glyph size="h-3 w-3" box="0 0 12 12">
                {featureArt[f]}
              </Glyph>
            </button>
            <span className="mt-[2px] flex h-1 w-full">
              <span className={clsx("w-1/2 border-r border-[#aaa]", i > 0 && "border-b")} />
              <span className={clsx("w-1/2 border-[#aaa]", i < features.length - 1 && "border-b")} />
            </span>
          </li>
        ))}
      </ol>
      <Glyph size="h-[22px] w-2" box="0 0 8 22">
        <path d="M0 0h8v3L5 6v16H3V6L0 3z" fill="#555" />
      </Glyph>
      <button aria-label="設定" className="mr-2 ml-auto">
        <MdSettings size={13} color="#777" />
      </button>
    </footer>
  );
}

export default function App() {
  return (
    <div className={clsx("flex h-screen flex-col overflow-hidden", jp)}>
      <TitleBar />
      <QuickBar />
      <Ribbon />
      <main className="relative flex flex-1 flex-col items-start justify-between pt-[5px] pb-[3px]">
        <Scene />
        <div className="relative">
          <Browser />
        </div>
        <div className="relative">
          <PanelBar title="コメント" sign="+" />
        </div>
        <ViewCube />
        <NavBar />
      </main>
      <Timeline />
    </div>
  );
}
